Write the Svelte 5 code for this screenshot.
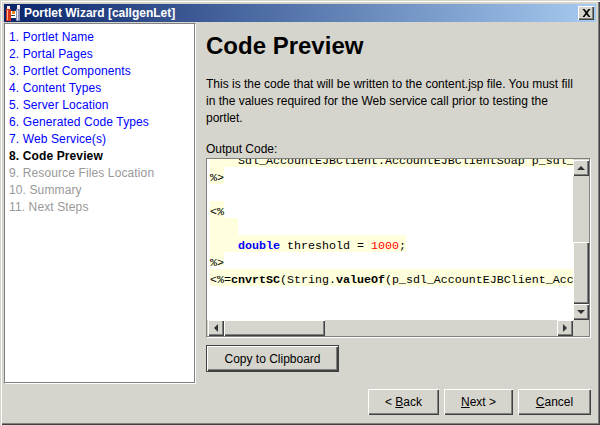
<script>
	const steps = [
		{ label: '1. Portlet Name', state: 'link' },
		{ label: '2. Portal Pages', state: 'link' },
		{ label: '3. Portlet Components', state: 'link' },
		{ label: '4. Content Types', state: 'link' },
		{ label: '5. Server Location', state: 'link' },
		{ label: '6. Generated Code Types', state: 'link' },
		{ label: '7. Web Service(s)', state: 'link' },
		{ label: '8. Code Preview', state: 'current' },
		{ label: '9. Resource Files Location', state: 'off' },
		{ label: '10. Summary', state: 'off' },
		{ label: '11. Next Steps', state: 'off' }
	];
</script>

<div class="window">
	<header class="titlebar">
		<svg class="appicon" width="16" height="16" viewBox="0 0 16 16">
			<rect x="1" y="4" width="5" height="12" fill="#d83418" />
			<rect x="2" y="5" width="1" height="10" fill="#f8b090" />
			<rect x="2" y="1" width="3" height="3" fill="#f4e8e0" />
			<rect x="6" y="6" width="5" height="7" fill="#fff" />
			<rect x="7" y="6" width="3" height="3" fill="#e88a20" />
			<rect x="6" y="10" width="4" height="1" fill="#404040" />
			<rect x="11" y="4" width="4" height="12" fill="#8c90b8" />
			<rect x="12" y="5" width="1" height="10" fill="#e8e8f4" />
			<rect x="12" y="0" width="3" height="4" fill="#f0ece8" />
		</svg>
		<span class="title">Portlet Wizard [callgenLet]</span>
		<button class="close" aria-label="Close">
			<svg width="9" height="8" viewBox="0 0 9 8"><path d="M0.500 0h2l2 2.500 2-2.500h2l-3 4 3 4h-2l-2-2.500-2 2.500h-2l3-4z" fill="#000" /></svg>
		</button>
	</header>

	<div class="main">
		<nav class="steps">
			{#each steps as step}
				<div class={step.state}>{step.label}</div>
			{/each}
		</nav>

		<section class="page">
			<h1>Code Preview</h1>
			<p>This is the code that will be written to the content.jsp file. You must fill<br />in the values required for the Web service call prior to testing the<br />portlet.</p>
			<div class="caption">Output Code:</div>
			<div class="codebox">
				<div class="codeview">
					<div class="code">
						<div class="line full"><span class="t ind">Sdl_AccountEJBClient.AccountEJBClientSoap p_sdl_</span></div>
						<div class="line"><span class="t">%&gt;</span></div>
						<div class="line"></div>
						<div class="line"><span class="t">&lt;%</span></div>
						<div class="line"><span class="t ind"></span></div>
						<div class="line"><span class="t ind"><b class="kw">double</b> threshold = <span class="num">1000</span>;</span></div>
						<div class="line short"><span class="t">%&gt;</span></div>
						<div class="line full"><span class="t">&lt;%=<b>cnvrtSC</b>(String.<b>valueOf</b>(p_sdl_AccountEJBClient_Acc</span></div>
					</div>
				</div>
				<div class="vbar">
					<button class="sbtn" aria-label="Up"><i class="arrow up"></i></button>
					<div class="track"><div class="vthumb"></div></div>
					<button class="sbtn" aria-label="Down"><i class="arrow down"></i></button>
				</div>
				<div class="hbar">
					<button class="sbtn" aria-label="Left"><i class="arrow left"></i></button>
					<div class="track htrack"><div class="hthumb"></div></div>
					<button class="sbtn" aria-label="Right"><i class="arrow right"></i></button>
				</div>
				<div class="corner"></div>
			</div>
			<button class="btn copy">Copy to Clipboard</button>
		</section>
	</div>

	<footer class="actions">
		<button class="btn back">&lt; <u>B</u>ack</button>
		<button class="btn next"><u>N</u>ext &gt;</button>
		<button class="btn cancel"><u>C</u>ancel</button>
	</footer>
</div>

<style>
	:global(body) {
		margin: 0;
		background: #d6d5cd;
	}
	.window {
		box-sizing: border-box;
		width: 600px;
		height: 425px;
		display: flex;
		flex-direction: column;
		padding: 4px 4px 0;
		background: #d6d5cd;
		font-family: "Liberation Sans", Arial, sans-serif;
		font-size: 12px;
		color: #000;
		box-shadow: inset 1px 1px 0 #d6d5cd, inset 2px 2px 0 #fff, inset -1px -1px 0 #404040, inset -2px -2px 0 #808080;
		overflow: hidden;
	}
	.titlebar {
		flex: none;
		height: 18px;
		display: flex;
		align-items: center;
		padding: 0 2px 0 1px;
		background: linear-gradient(90deg, #0a246a, #a6caf0);
		color: #fff;
	}
	.appicon {
		flex: none;
	}
	.title {
		flex: 1;
		margin-left: 3px;
		font-weight: bold;
		font-size: 12px;
	}
	button {
		font: inherit;
		color: inherit;
		padding: 0;
		margin: 0;
		background: #d6d5cd;
		border: 0;
		display: block;
	}
	.close {
		width: 16px;
		height: 14px;
		display: flex;
		align-items: center;
		justify-content: center;
		box-shadow: inset 1px 1px 0 #fff, inset -1px -1px 0 #404040, inset -2px -2px 0 #808080;
	}
	.main {
		flex: none;
		display: flex;
		margin-top: 1px;
	}
	.steps {
		box-sizing: border-box;
		flex: none;
		width: 192px;
		height: 361px;
		padding: 5px 0 0 4px;
		background: #fff;
		border: 1px solid #808080;
		border-right-color: #fff;
		border-bottom-color: #fff;
		box-shadow: inset -1px -1px 0 #808080;
		line-height: 17px;
		letter-spacing: 0.12px;
	}
	.link {
		color: #0000ff;
	}
	.current {
		font-weight: bold;
	}
	.off {
		color: #999;
	}
	.page {
		flex: 1;
		min-width: 0;
		padding: 0 6px 0 10px;
	}
	h1 {
		margin: 9px 0 0;
		font-size: 24px;
		line-height: 28px;
		font-weight: bold;
	}
	p {
		margin: 16px 0 0;
		line-height: 17px;
		white-space: nowrap;
	}
	.caption {
		margin-top: 14px;
		line-height: 17px;
	}
	.codebox {
		box-sizing: border-box;
		width: 385px;
		height: 180px;
		display: grid;
		grid-template-columns: minmax(0, 1fr) 16px;
		grid-template-rows: minmax(0, 1fr) 16px;
		border: 1px solid #808080;
		border-right-color: #fff;
		border-bottom-color: #fff;
		box-shadow: inset -1px -1px 0 #808080;
		padding: 0 1px 1px 0;
	}
	.codeview {
		background: #fff;
		overflow: hidden;
		padding-left: 3px;
	}
	.code {
		margin-top: -9px;
		font-family: "Liberation Mono", "Courier New", monospace;
		font-size: 11.67px;
		line-height: 23px;
	}
	.line {
		height: 17px;
	}
	.t {
		display: inline-block;
		height: 17px;
		background: #ffffdd;
		vertical-align: top;
		white-space: pre;
	}
	.ind {
		padding-left: 28px;
	}
	.full .t {
		display: block;
	}
	.short .t {
		height: 14px;
	}
	.kw {
		color: #0000ff;
	}
	.num {
		color: #ff0000;
	}
	.vbar {
		display: flex;
		flex-direction: column;
		padding-top: 1px;
		min-height: 0;
	}
	.hbar {
		display: flex;
		padding-left: 1px;
	}
	.track {
		flex: 1;
		min-height: 0;
		display: flex;
		flex-direction: column;
		justify-content: flex-end;
	}
	.htrack {
		display: block;
	}
	.sbtn,
	.vthumb,
	.hthumb {
		background: #d6d5cd;
		box-shadow: inset 1px 1px 0 #fff, inset -1px -1px 0 #404040, inset -2px -2px 0 #808080;
	}
	.sbtn {
		flex: none;
		width: 16px;
		height: 16px;
		display: flex;
		align-items: center;
		justify-content: center;
	}
	.vthumb {
		height: 62px;
	}
	.hthumb {
		width: 101px;
		height: 16px;
	}
	.arrow {
		width: 0;
		height: 0;
		border: 4px solid transparent;
		display: block;
	}
	.up {
		border-top: 0;
		border-bottom-color: #333;
	}
	.down {
		border-bottom: 0;
		border-top-color: #333;
	}
	.left {
		border-left: 0;
		border-right-color: #333;
	}
	.right {
		border-right: 0;
		border-left-color: #333;
	}
	.btn {
		box-sizing: border-box;
		height: 26px;
		text-align: center;
		box-shadow: inset 1px 1px 0 #fff, inset -1px -1px 0 #404040, inset -2px -2px 0 #808080;
	}
	.copy {
		width: 133px;
		height: 27px;
		margin-top: 7px;
		border: 1px solid #404040;
	}
	.actions {
		flex: none;
		display: flex;
		justify-content: flex-end;
		gap: 5px;
		margin-top: 5px;
		padding-right: 5px;
	}
	.back {
		width: 71px;
	}
	.next {
		width: 69px;
	}
	.cancel {
		width: 73px;
	}
</style>
